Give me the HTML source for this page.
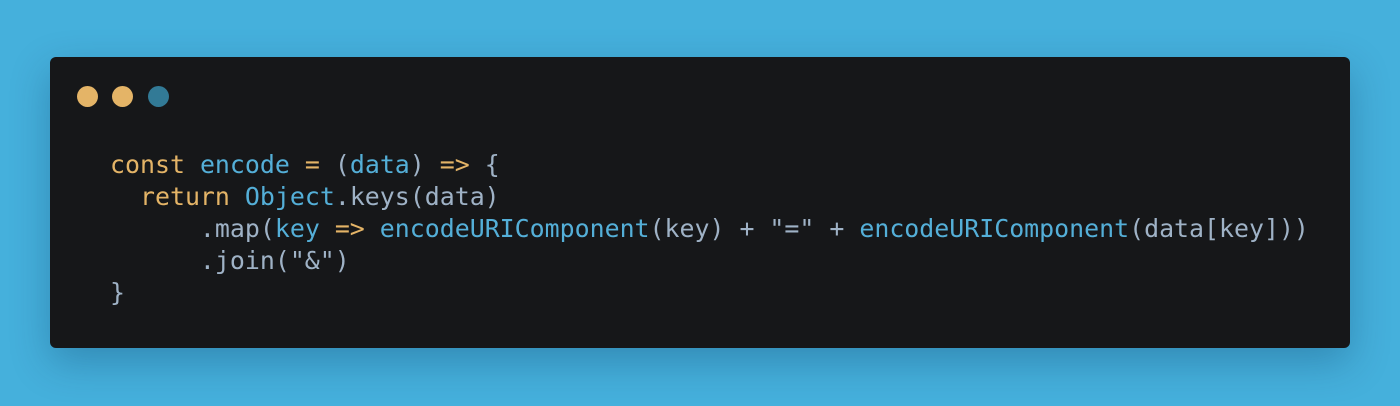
<!DOCTYPE html>
<html><head><style>
html,body{margin:0;padding:0;width:1400px;height:406px;background:#45b0dc;overflow:hidden}
.card{position:absolute;left:50px;top:57px;width:1300px;height:291px;background:#161719;border-radius:6px;box-shadow:0 14px 40px rgba(0,40,80,.28)}
.dot{position:absolute;top:29px;width:21px;height:21px;border-radius:50%}
pre{position:absolute;left:60px;top:92px;margin:0;font-family:"DejaVu Sans Mono","Liberation Mono",monospace;font-size:24.9px;line-height:32px;color:#9fb2c6}
.k{color:#e4b467}.b{color:#54afd8}
</style></head><body>
<div class="card">
<div class="dot" style="left:27px;background:#e4b467"></div>
<div class="dot" style="left:62px;background:#e4b467"></div>
<div class="dot" style="left:98px;background:#327a96"></div>
<pre><span class="k">const</span> <span class="b">encode</span> <span class="k">=</span> (<span class="b">data</span>) <span class="k">=&gt;</span> {
  <span class="k">return</span> <span class="b">Object</span>.keys(data)
      .map(<span class="b">key</span> <span class="k">=&gt;</span> <span class="b">encodeURIComponent</span>(key) + "=" + <span class="b">encodeURIComponent</span>(data[key]))
      .join("&amp;")
}</pre>
</div>
</body></html>
